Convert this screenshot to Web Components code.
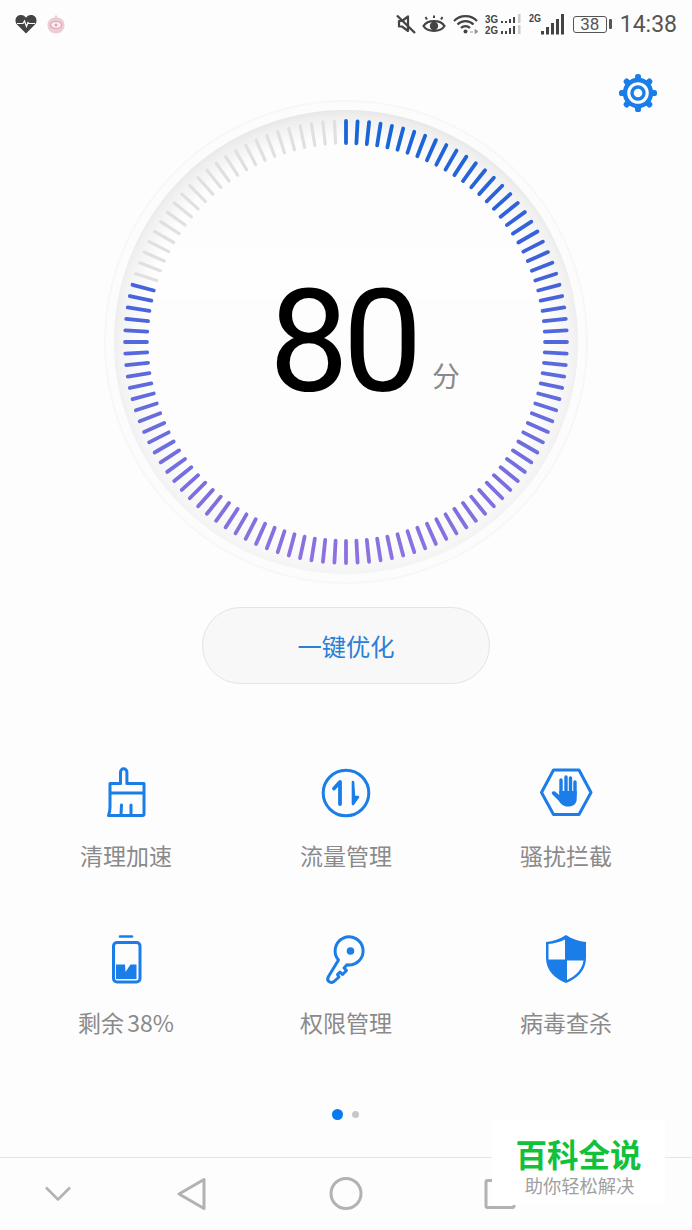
<!DOCTYPE html>
<html>
<head>
<meta charset="utf-8">
<style>
  html, body { margin: 0; padding: 0; background: #fdfdfd; }
  body { width: 692px; height: 1230px; overflow: hidden; font-family: "Noto Sans CJK SC", "Liberation Sans", sans-serif; }
  #app { position: relative; display: flex; flex-direction: column; height: 1230px; }
</style>
</head>
<body>
<div id="app">
  <status-bar></status-bar>
  <score-dial score="80" unit="分"></score-dial>
  <action-button>一键优化</action-button>
  <tool-grid>
    <tool-tile icon="broom">清理加速</tool-tile>
    <tool-tile icon="flow">流量管理</tool-tile>
    <tool-tile icon="hand">骚扰拦截</tool-tile>
    <tool-tile icon="battery">剩余 38%</tool-tile>
    <tool-tile icon="key">权限管理</tool-tile>
    <tool-tile icon="shield">病毒查杀</tool-tile>
  </tool-grid>
  <page-dots></page-dots>
  <nav-bar></nav-bar>
  <water-mark></water-mark>
</div>

<script>
const BLUE = '#1a7de8';

class StatusBar extends HTMLElement {
  constructor() {
    super();
    this.attachShadow({ mode: 'open' });
  }
  connectedCallback() {
    this.shadowRoot.innerHTML = `
      <style>
        :host { display: flex; justify-content: space-between; align-items: center; height: 48px; padding: 0 15px; color: #4a4a4a; font-family: Roboto, sans-serif; flex: none; }
        .side { display: flex; align-items: center; }
        svg { display: block; }
        .time { font-size: 23px; color: #555; margin-left: 8px; }
        .batt { position: relative; width: 34px; height: 17px; box-sizing: border-box; border: 1.5px solid #555; border-radius: 3px; font-size: 17px; line-height: 15px; text-align: center; color: #555; margin-left: 9px; }
        .tip { width: 3px; height: 10px; background: #555; border-radius: 1px; margin-left: 2px; }
      </style>
      <div class="side">
        <svg width="22" height="20" viewBox="0 0 22 20">
          <path d="M11 19.5 L2 10.5 C-1 7 0.5 1 6 1 C8.5 1 10 2.3 11 3.8 C12 2.3 13.5 1 16 1 C21.5 1 23 7 20 10.5 Z" fill="#444"/>
          <path d="M2 9.5 H8 L9.5 7 L11.5 12.5 L13 8.5 L14 9.5 H20" fill="none" stroke="#fff" stroke-width="1.2"/>
        </svg>
        <svg width="18" height="20" viewBox="0 0 18 20" style="margin-left:10px">
          <path d="M9 0.5 L10.5 3.5 C15 4 17.5 7 17.5 11 C17.5 16 13.5 19.5 9 19.5 C4.5 19.5 0.5 16 0.5 11 C0.5 7 3.5 4 7.5 3.5 Z" fill="#eccdd4"/>
          <ellipse cx="9" cy="11" rx="5.5" ry="3.5" fill="#fbeff1" stroke="#dca5b1" stroke-width="1.2"/>
          <circle cx="9" cy="11" r="1.5" fill="#dca5b1"/>
        </svg>
      </div>
      <div class="side">
        <svg width="22" height="22" viewBox="0 0 22 22">
          <path d="M4 8 H7 L13 3.5 V18 L7 13.5 H4 Z" fill="none" stroke="#444" stroke-width="2.2" stroke-linejoin="round"/>
          <path d="M2 2.5 L20 20" stroke="#444" stroke-width="2.4"/>
        </svg>
        <svg width="24" height="22" viewBox="0 0 24 22" style="margin-left:5px">
          <path d="M1.5 13 C5.5 6.5 18.5 6.5 22.5 13 C18.5 19.5 5.5 19.5 1.5 13 Z" fill="none" stroke="#444" stroke-width="2.2"/>
          <circle cx="12" cy="13" r="4.2" fill="#444"/>
          <path d="M5 6.5 L3.5 4 M12 5 V2.5 M19 6.5 L20.5 4" stroke="#444" stroke-width="2"/>
        </svg>
        <svg width="26" height="22" viewBox="0 0 26 22" style="margin-left:7px">
          <path d="M1 8 C7 1.5 18 1.5 24 8 M4.5 11.5 C9 7 16 7 20.5 11.5 M8 15 C10.5 12.5 14.5 12.5 17 15" fill="none" stroke="#444" stroke-width="2.2"/>
          <circle cx="12.5" cy="18.5" r="2" fill="#444"/>
          <path d="M17 19 H20 M22 16.5 L25 18.5 L22 20.5 Z" stroke="#999" fill="#999" stroke-width="1"/>
        </svg>
        <svg width="37" height="22" viewBox="0 0 37 22" style="margin-left:6px">
          <text x="0" y="10" font-family="'Liberation Sans',sans-serif" font-size="11" font-weight="700" fill="#444" textLength="13" lengthAdjust="spacingAndGlyphs">3G</text>
          <text x="0" y="21" font-family="'Liberation Sans',sans-serif" font-size="11" font-weight="700" fill="#444" textLength="13" lengthAdjust="spacingAndGlyphs">2G</text>
          <path d="M16 8 h2 v2 h-2z M20 8 h2 v2 h-2z M24 6 h2 v4 h-2z M28 4 h2 v6 h-2z M16 18 h2 v3 h-2z M20 18 h2 v3 h-2z M24 15 h2 v6 h-2z M28 13 h2 v8 h-2z" fill="#444"/>
          <path d="M33 1 h2.5 v9 h-2.5z M33 12 h2.5 v9 h-2.5z" fill="#ccc"/>
        </svg>
        <svg width="35" height="24" viewBox="0 0 35 24" style="margin-left:7px">
          <text x="0" y="10" font-family="'Liberation Sans',sans-serif" font-size="11" font-weight="700" fill="#444" textLength="12" lengthAdjust="spacingAndGlyphs">2G</text>
          <path d="M12 19 h3 v3.5 h-3z M17 15 h3 v7.5 h-3z M22 11 h3 v11.5 h-3z M27 7 h3 v15.5 h-3z M32 2 h3 v20.5 h-3z" fill="#444"/>
        </svg>
        <div class="batt">38</div>
        <div class="tip"></div>
        <div class="time">14:38</div>
      </div>
    `;
  }
}
customElements.define('status-bar', StatusBar);

class ScoreDial extends HTMLElement {
  constructor() {
    super();
    this.attachShadow({ mode: 'open' });
  }
  connectedCallback() {
    const score = Number(this.getAttribute('score'));
    const unit = this.getAttribute('unit');
    const lit = Math.round(120 * score / 100);
    let ticks = '';
    for (let i = 0; i < 120; i++) {
      const a = i * 3 * Math.PI / 180;
      const s = Math.sin(a), c = Math.cos(a);
      const x1 = 250 + 199 * s, y1 = 250 - 199 * c;
      const x2 = 250 + 221 * s, y2 = 250 - 221 * c;
      const on = i < lit;
      ticks += `<line x1="${x1.toFixed(2)}" y1="${y1.toFixed(2)}" x2="${x2.toFixed(2)}" y2="${y2.toFixed(2)}"
        stroke="${on ? 'url(#lit)' : '#e0e0e0'}" stroke-width="${on ? 3.8 : 3.2}" stroke-linecap="round"/>`;
    }
    this.shadowRoot.innerHTML = `
      <style>
        :host { display: block; position: relative; height: 509px; flex: none; }
        .wrap { width: 500px; height: 500px; margin: 44px auto 0; position: relative; display: flex; justify-content: center; align-items: center; }
        svg.ring { position: absolute; inset: 0; }
        .value { display: flex; align-items: flex-end; position: relative; left: 18.5px; top: 1px; }
        .num { font: 400 142px/142px Roboto, sans-serif; color: #000; letter-spacing: -6px; width: 163px; }
        .unit { font: 400 28px/34px "Noto Sans CJK SC", sans-serif; color: #8a8a8a; margin-bottom: 22px; }
        .gear { position: absolute; top: 25px; right: 34px; }
      </style>
      <div class="wrap">
        <svg class="ring" width="500" height="500" viewBox="0 0 500 500">
          <defs>
            <linearGradient id="lit" gradientUnits="userSpaceOnUse" x1="250" y1="29" x2="250" y2="471">
              <stop offset="0" stop-color="#1566d8"/>
              <stop offset="0.3" stop-color="#3d60da"/>
              <stop offset="0.6" stop-color="#5f6bdd"/>
              <stop offset="1" stop-color="#8f72e0"/>
            </linearGradient>
            <radialGradient id="band" gradientUnits="userSpaceOnUse" cx="250" cy="250" r="232">
              <stop offset="0.88" stop-color="#fdfdfd"/>
              <stop offset="0.98" stop-color="#ececec"/>
              <stop offset="1" stop-color="#e6e6e6"/>
            </radialGradient>
            <linearGradient id="fade" x1="0" y1="0" x2="0" y2="1">
              <stop offset="0" stop-color="#fff" stop-opacity="1"/>
              <stop offset="0.5" stop-color="#fff" stop-opacity="0.6"/>
              <stop offset="1" stop-color="#fff" stop-opacity="0.4"/>
            </linearGradient>
            <mask id="bandMask"><rect width="500" height="500" fill="url(#fade)"/></mask>
          </defs>
          <circle cx="250" cy="250" r="241" fill="#fcfcfc" stroke="#f7f7f7" stroke-width="2"/>
          <circle cx="250" cy="250" r="232" fill="#fdfdfd"/>
          <circle cx="250" cy="250" r="232" fill="url(#band)" mask="url(#bandMask)"/>
          ${ticks}
        </svg>
        <div class="value"><span class="num">${score}</span><span class="unit">${unit}</span></div>
      </div>
      <svg class="gear" width="40" height="40" viewBox="-20 -20 40 40">
        ${[0, 45, 90, 135, 180, 225, 270, 315].map(r => `<rect x="-3" y="-19" width="6" height="7" rx="2.6" fill="${BLUE}" transform="rotate(${r})"/>`).join('')}
        <circle r="13" fill="none" stroke="${BLUE}" stroke-width="4.4"/>
        <circle r="6" fill="none" stroke="${BLUE}" stroke-width="3.4"/>
      </svg>
    `;
  }
}
customElements.define('score-dial', ScoreDial);

class ActionButton extends HTMLElement {
  constructor() {
    super();
    this.attachShadow({ mode: 'open' });
    this.shadowRoot.innerHTML = `
      <style>
        :host { display: flex; justify-content: center; flex: none; height: 77px; margin-top: 50px; }
        button { width: 288px; height: 77px; box-sizing: border-box; background: #f8f8f8; border: 1.5px solid #e4e4e4; border-radius: 39px; color: #2a80d6; font: 400 24.3px "Noto Sans CJK SC", sans-serif; padding: 0; }
      </style>
      <button><slot></slot></button>
    `;
  }
}
customElements.define('action-button', ActionButton);

class ToolGrid extends HTMLElement {
  constructor() {
    super();
    this.attachShadow({ mode: 'open' });
    this.shadowRoot.innerHTML = `
      <style>
        :host { display: grid; grid-template-columns: repeat(3, 220px); grid-auto-rows: 167px; padding: 0 16px; margin-top: 79px; flex: none; }
      </style>
      <slot></slot>
    `;
  }
}
customElements.define('tool-grid', ToolGrid);

const ICONS = {
  broom: `
    <path d="M14 20.5 H24.5 V9 a3.2 3.2 0 0 1 6.4 0 V20.5 H48 V51 a1.5 1.5 0 0 1 -1.5 1.5 H12.5 C13.5 50 14 47 14 44 Z M14 30 H48 M25.5 42 L25 52 M35 42 V52"
      fill="none" stroke="${BLUE}" stroke-width="3" stroke-linejoin="round" stroke-linecap="round"/>`,
  flow: `
    <circle cx="30" cy="30" r="22.8" fill="none" stroke="${BLUE}" stroke-width="3"/>
    <path d="M24 41 V19 L18 25.5" fill="none" stroke="${BLUE}" stroke-width="3.8" stroke-linejoin="round" stroke-linecap="round"/>
    <path d="M37 19 V41 L42 34 H38 Z" fill="${BLUE}" stroke="${BLUE}" stroke-width="2.6" stroke-linejoin="round"/>`,
  hand: `
    <path d="M5.5 29.5 L17.5 7 H43 L55 29.5 L43 51.5 H17.5 Z" fill="none" stroke="${BLUE}" stroke-width="3" stroke-linejoin="round"/>
    <path d="M25 30 V17 M30 30 V14 M34.5 30 V15 M39 32 V19" stroke="${BLUE}" stroke-width="3.4" stroke-linecap="round"/>
    <path d="M23.3 28 H40.7 V36 C40.7 41 37 43.5 32 43.5 C27 43.5 25 41 22.5 37.5 L16 31 C15 29 17 27.5 19 28.5 L23.3 32 Z" fill="${BLUE}"/>`,
  battery: `
    <rect x="17.5" y="12.5" width="26.5" height="39.5" rx="3.5" fill="none" stroke="${BLUE}" stroke-width="3"/>
    <path d="M24 6.5 H36" stroke="${BLUE}" stroke-width="2.5" stroke-linecap="round"/>
    <path d="M20 34.5 H29 L29.5 42 L34.5 34.5 H40.5 V49 H20 Z" fill="${BLUE}"/>`,
  key: `
    <path d="M22.5 30 A14 14 0 1 1 31 34.7 L28 38 L30.5 40.5 L26.5 44.5 L24 42 L21.5 44.5 L23 47 L18 51.5 C14 54 10 50.5 12.5 46.5 Z"
      fill="none" stroke="${BLUE}" stroke-width="3" stroke-linejoin="round"/>
    <circle cx="34.5" cy="21" r="3.8" fill="${BLUE}"/>`,
  shield: `
    <path d="M30 5 C36 9 43 11.5 50 12 V28 C50 40 41 49 30 53 C19 49 10 40 10 28 V12 C17 11.5 24 9 30 5 Z" fill="${BLUE}"/>
    <path d="M29 9.5 V29.5 H12.5 V14 C18 13.5 24 12 29 9.5 Z" fill="#fdfdfd"/>
    <path d="M31 30.5 H47.5 C46.5 39 40 46 31 50 Z" fill="#fdfdfd"/>`
};

class ToolTile extends HTMLElement {
  constructor() {
    super();
    this.attachShadow({ mode: 'open' });
  }
  connectedCallback() {
    this.shadowRoot.innerHTML = `
      <style>
        :host { display: flex; flex-direction: column; align-items: center; font: 400 23px/34px "Noto Sans CJK SC", sans-serif; color: #8a8a8a; word-spacing: -2px; }
        svg { display: block; margin-bottom: 15px; }
      </style>
      <svg width="60" height="60" viewBox="0 0 60 60">${ICONS[this.getAttribute('icon')]}</svg>
      <slot></slot>
    `;
  }
}
customElements.define('tool-tile', ToolTile);

class PageDots extends HTMLElement {
  constructor() {
    super();
    this.attachShadow({ mode: 'open' });
    this.shadowRoot.innerHTML = `
      <style>
        :host { display: flex; justify-content: center; align-items: center; gap: 9px; height: 12px; margin-top: 11px; padding-right: 2px; flex: none; }
        .a { width: 11px; height: 11px; border-radius: 50%; background: #0a79ee; }
        .b { width: 7px; height: 7px; border-radius: 50%; background: #c8c8c8; }
      </style>
      <div class="a"></div><div class="b"></div>
    `;
  }
}
customElements.define('page-dots', PageDots);

class NavBar extends HTMLElement {
  constructor() {
    super();
    this.attachShadow({ mode: 'open' });
    this.shadowRoot.innerHTML = `
      <style>
        :host { display: block; flex: none; margin-top: auto; height: 73px; border-top: 1.5px solid #e6e6e6; box-sizing: border-box; }
        svg { display: block; }
      </style>
      <svg width="692" height="71" viewBox="0 1157.5 692 71">
        <path d="M46 1187 L58 1199 L70 1187" fill="none" stroke="#b2b2b2" stroke-width="2.5" stroke-linejoin="round"/>
        <path d="M204 1179 V1208 L179 1193.5 Z" fill="none" stroke="#b2b2b2" stroke-width="3" stroke-linejoin="round"/>
        <circle cx="346" cy="1193" r="15" fill="none" stroke="#b2b2b2" stroke-width="3"/>
        <rect x="486" y="1180" width="28" height="27" rx="1.5" fill="none" stroke="#b2b2b2" stroke-width="3"/>
      </svg>
    `;
  }
}
customElements.define('nav-bar', NavBar);

class WaterMark extends HTMLElement {
  constructor() {
    super();
    this.attachShadow({ mode: 'open' });
    this.shadowRoot.innerHTML = `
      <style>
        :host { position: absolute; left: 492px; top: 1120px; width: 173px; height: 85px; background: #fff; display: flex; flex-direction: column; align-items: center; font-family: "Noto Sans CJK SC", sans-serif; }
        .t { font-size: 31.5px; line-height: 36px; font-weight: 700; color: #12c13a; margin-top: 15px; }
        .s { font-size: 18.3px; line-height: 24px; color: #a0a0a0; margin-top: 2px; margin-left: 2px; }
      </style>
      <div class="t">百科全说</div>
      <div class="s">助你轻松解决</div>
    `;
  }
}
customElements.define('water-mark', WaterMark);
</script>
</body>
</html>
